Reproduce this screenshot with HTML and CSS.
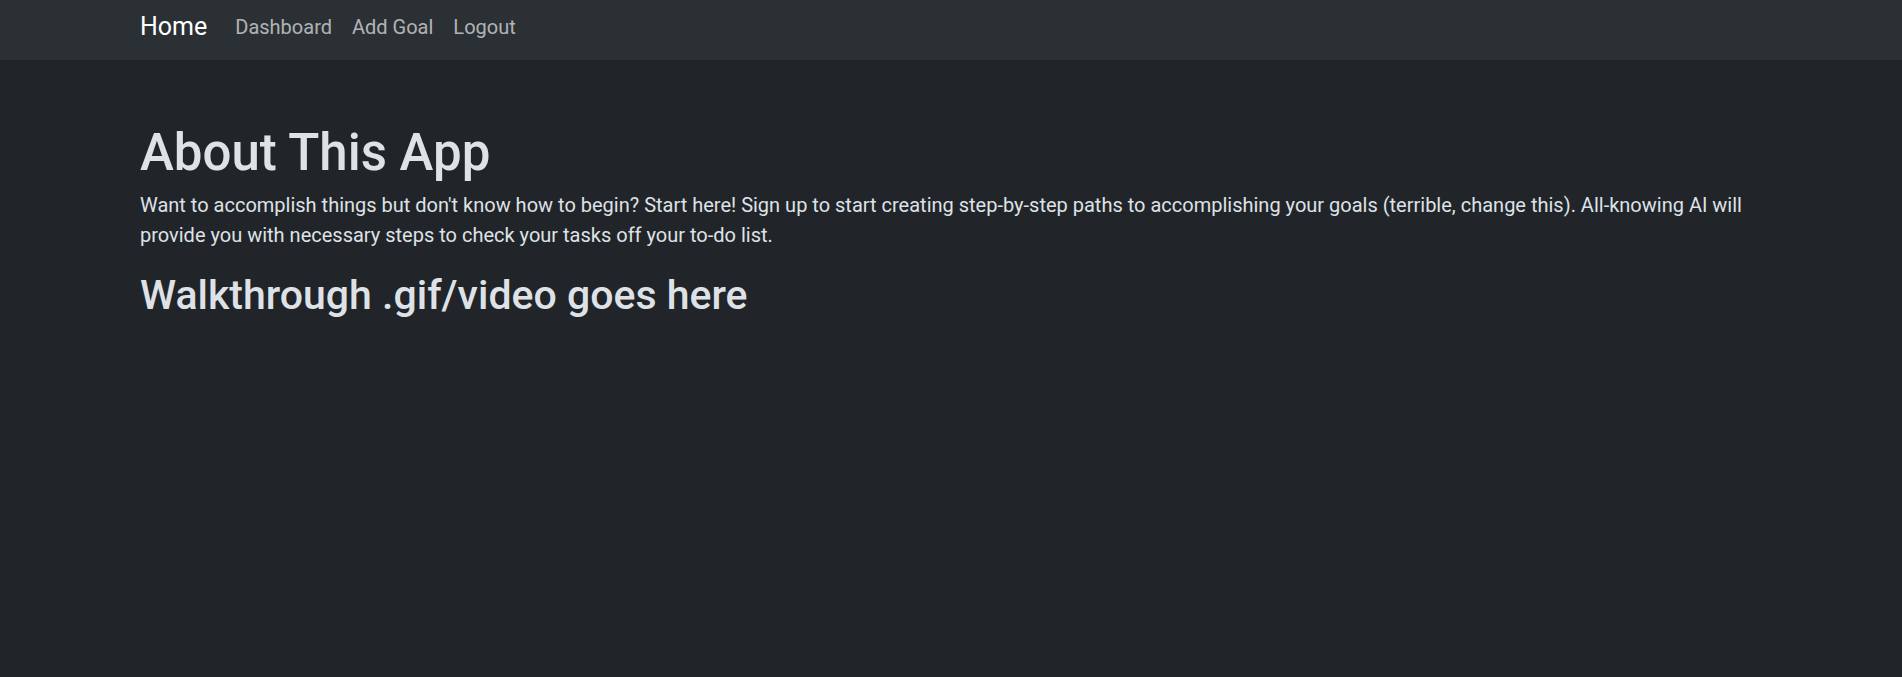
FILE: index.html
```html
<!DOCTYPE html>
<html lang="en">
<head>
<meta charset="utf-8">
<title>About This App</title>
<link rel="stylesheet" href="styles.css">
</head>
<body>
<nav class="navbar">
  <div class="container nav-inner">
    <a class="brand" href="#">Home</a>
    <ul class="nav-links">
      <li><a class="nav-link" href="#">Dashboard</a></li>
      <li><a class="nav-link" href="#">Add Goal</a></li>
      <li><a class="nav-link" href="#">Logout</a></li>
    </ul>
  </div>
</nav>
<main class="container main">
  <h1 class="title">About This App</h1>
  <p class="intro">Want to accomplish things but don't know how to begin? Start here! Sign up to start creating step-by-step paths to accomplishing your goals (terrible, change this). All-knowing AI will provide you with necessary steps to check your tasks off your to-do list.</p>
  <h2 class="subtitle">Walkthrough .gif/video goes here</h2>
</main>
</body>
</html>
```
FILE: styles.css
```css
* { box-sizing: border-box; }
html, body { height: 100%; }
body {
  margin: 0;
  background: #212529;
  color: #dee2e6;
  font-family: "Roboto", "Liberation Sans", sans-serif;
  font-size: 20px;
  line-height: 30px;
}
.container {
  max-width: 1650px;
  margin: 0 auto;
  padding: 0 14px;
}
.navbar {
  background: #2b3035;
  height: 60px;
}
.nav-inner {
  display: flex;
  align-items: center;
  height: 60px;
  padding-bottom: 7px;
}
.brand {
  color: #ffffff;
  text-decoration: none;
  font-size: 25px;
  line-height: 30px;
  margin-right: 18px;
}
.nav-links {
  display: flex;
  list-style: none;
  margin: 0;
  padding: 0;
}
.nav-link {
  display: block;
  padding: 0 10px;
  color: rgba(255, 255, 255, 0.65);
  text-decoration: none;
  font-size: 20px;
  line-height: 30px;
}
.main {
  padding-top: 62px;
}
.title {
  margin: 0 0 7px;
  font-size: 51px;
  font-weight: 500;
  line-height: 1.2;
  color: #dee2e6;
}
.intro {
  margin: 0 0 21px;
}
.subtitle {
  margin: 0;
  font-size: 41px;
  font-weight: 500;
  line-height: 1.2;
  color: #dee2e6;
}
```
